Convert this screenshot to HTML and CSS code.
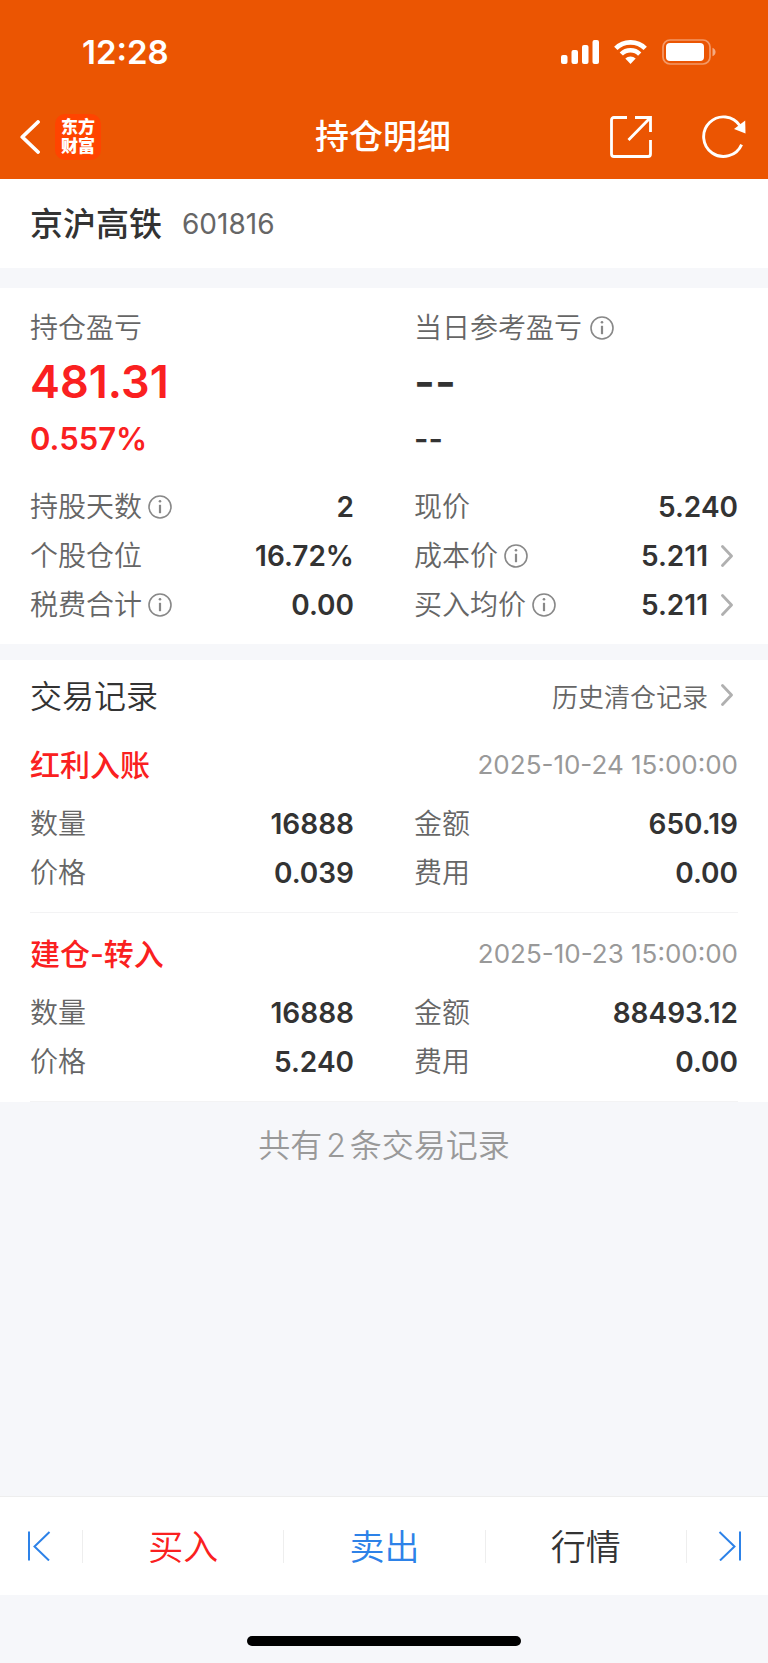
FILE: index.html
```html
<!DOCTYPE html>
<html lang="zh-CN">
<head>
    <meta charset="UTF-8">
    <meta name="viewport" content="width=device-width, initial-scale=1.0">
    <title>持仓明细</title>
    <link rel="stylesheet" href="styles.css">
</head>
<body>
    <svg class="symbols" aria-hidden="true">
        <symbol id="icon-info" viewBox="0 0 24 24">
            <circle cx="12" cy="12" r="11" fill="none" stroke="currentColor" stroke-width="1.6"/>
            <circle cx="12" cy="6.3" r="1.3" fill="currentColor"/>
            <path d="M12 9.8v8.4" stroke="currentColor" stroke-width="2.2"/>
        </symbol>
        <symbol id="icon-more" viewBox="0 0 12 22">
            <path d="M1.5 1.5L10.5 11L1.5 20.5" fill="none" stroke="currentColor" stroke-width="2.8" stroke-linecap="round" stroke-linejoin="round"/>
        </symbol>
    </svg>

    <header class="header">
        <div class="status-bar">
            <span class="time">12:28</span>
            <div class="status-icons">
                <svg width="38" height="24" viewBox="0 0 38 24" fill="#fff">
                    <rect x="0" y="15" width="6.5" height="9" rx="2"/>
                    <rect x="10.5" y="10" width="6.5" height="14" rx="2"/>
                    <rect x="21" y="5" width="6.5" height="19" rx="2"/>
                    <rect x="31.5" y="0" width="6.5" height="24" rx="2"/>
                </svg>
                <svg width="33" height="24" viewBox="0 0 33 24">
                    <path d="M1.8 8.4A21 21 0 0 1 31.2 8.4" fill="none" stroke="#fff" stroke-width="4.8"/>
                    <path d="M7.3 14A13 13 0 0 1 25.7 14" fill="none" stroke="#fff" stroke-width="4.6"/>
                    <path d="M11.3 18.6A7.6 7.6 0 0 1 21.7 18.6L16.5 24Z" fill="#fff"/>
                </svg>
                <svg width="54" height="26" viewBox="0 0 54 26">
                    <rect x="1" y="1" width="47" height="24" rx="7" fill="none" stroke="#fff" stroke-opacity="0.4" stroke-width="1.7"/>
                    <rect x="4" y="4" width="38" height="18" rx="4" fill="#fff"/>
                    <path d="M50.5 8.7C54.6 10.5 54.6 15.5 50.5 17.3Z" fill="#fff" fill-opacity="0.5"/>
                </svg>
            </div>
        </div>
        <nav class="nav">
            <div class="nav-left">
                <button class="icon-button" aria-label="返回">
                    <svg width="20" height="34" viewBox="0 0 20 34">
                        <path d="M18 2L2.3 17L18 32" fill="none" stroke="#fff" stroke-width="3.8" stroke-linecap="round" stroke-linejoin="round"/>
                    </svg>
                </button>
                <a class="logo" href="#">东方<br>财富</a>
            </div>
            <h1>持仓明细</h1>
            <div class="nav-right">
                <button class="icon-button" aria-label="分享">
                    <svg width="42" height="42" viewBox="0 0 42 42" fill="none" stroke="#fff" stroke-width="2.8">
                        <path d="M17 1.5H4Q1.5 1.5 1.5 4V38Q1.5 40.5 4 40.5H38Q40.5 40.5 40.5 38V24"/>
                        <path d="M25 1.5H40.5V16M40 2L18.5 24"/>
                    </svg>
                </button>
                <button class="icon-button" aria-label="刷新">
                    <svg width="44" height="44" viewBox="0 0 44 44">
                        <path d="M39.6 29.6A19.8 19.8 0 1 1 38 10.8" fill="none" stroke="#fff" stroke-width="2.9"/>
                        <path d="M43.2 5.5L43.5 18.5L32 14Z" fill="#fff"/>
                    </svg>
                </button>
            </div>
        </nav>
    </header>

    <main>
        <section class="stock">
            <h2>京沪高铁</h2>
            <span class="code">601816</span>
        </section>

        <section class="position">
            <div class="columns">
                <div class="profit">
                    <div class="label">持仓盈亏</div>
                    <div class="amount red">481.31</div>
                    <div class="percent red">0.557%</div>
                </div>
                <div class="profit">
                    <div class="label">当日参考盈亏 <button class="info" aria-label="说明"><svg><use href="#icon-info"/></svg></button></div>
                    <div class="amount">--</div>
                    <div class="percent">--</div>
                </div>
            </div>
            <dl class="columns stats">
                <div class="row">
                    <dt class="label">持股天数<button class="info" aria-label="说明"><svg><use href="#icon-info"/></svg></button></dt>
                    <dd>2</dd>
                </div>
                <div class="row">
                    <dt class="label">现价</dt>
                    <dd>5.240</dd>
                </div>
                <div class="row">
                    <dt class="label">个股仓位</dt>
                    <dd>16.72%</dd>
                </div>
                <div class="row">
                    <dt class="label">成本价<button class="info" aria-label="说明"><svg><use href="#icon-info"/></svg></button></dt>
                    <dd><a href="#">5.211<svg class="more"><use href="#icon-more"/></svg></a></dd>
                </div>
                <div class="row">
                    <dt class="label">税费合计<button class="info" aria-label="说明"><svg><use href="#icon-info"/></svg></button></dt>
                    <dd>0.00</dd>
                </div>
                <div class="row">
                    <dt class="label">买入均价<button class="info" aria-label="说明"><svg><use href="#icon-info"/></svg></button></dt>
                    <dd><a href="#">5.211<svg class="more"><use href="#icon-more"/></svg></a></dd>
                </div>
            </dl>
        </section>

        <section class="records">
            <div class="records-head">
                <h2>交易记录</h2>
                <a href="#">历史清仓记录<svg class="more"><use href="#icon-more"/></svg></a>
            </div>
            <article class="record">
                <div class="record-head">
                    <h3>红利入账</h3>
                    <time datetime="2025-10-24T15:00:00">2025-10-24 15:00:00</time>
                </div>
                <dl class="columns">
                    <div class="row"><dt class="label">数量</dt><dd>16888</dd></div>
                    <div class="row"><dt class="label">金额</dt><dd>650.19</dd></div>
                    <div class="row"><dt class="label">价格</dt><dd>0.039</dd></div>
                    <div class="row"><dt class="label">费用</dt><dd>0.00</dd></div>
                </dl>
            </article>
            <article class="record">
                <div class="record-head">
                    <h3>建仓-转入</h3>
                    <time datetime="2025-10-23T15:00:00">2025-10-23 15:00:00</time>
                </div>
                <dl class="columns">
                    <div class="row"><dt class="label">数量</dt><dd>16888</dd></div>
                    <div class="row"><dt class="label">金额</dt><dd>88493.12</dd></div>
                    <div class="row"><dt class="label">价格</dt><dd>5.240</dd></div>
                    <div class="row"><dt class="label">费用</dt><dd>0.00</dd></div>
                </dl>
            </article>
        </section>
        <p class="total">共有<span class="count">2</span>条交易记录</p>
    </main>

    <footer>
        <div class="actions">
            <button class="prev blue" aria-label="上一只">
                <svg width="24" height="30" viewBox="0 0 24 30" fill="none" stroke="currentColor" stroke-width="2">
                    <path d="M2 0.5V29.5M22.5 1L7.5 15.5L22 29.5"/>
                </svg>
            </button>
            <button class="red">买入</button>
            <button class="blue">卖出</button>
            <button>行情</button>
            <button class="next blue" aria-label="下一只">
                <svg width="24" height="30" viewBox="0 0 24 30" fill="none" stroke="currentColor" stroke-width="2">
                    <path d="M22 0.5V29.5M1.5 1L16.5 15.5L2 29.5"/>
                </svg>
            </button>
        </div>
        <div class="home-indicator"></div>
    </footer>
</body>
</html>
```
FILE: styles.css
```css
* {
    box-sizing: border-box;
}
body {
    margin: 0;
    min-height: 100vh;
    display: flex;
    flex-direction: column;
    background-color: #f6f7fa;
    color: #333;
    font-family: Inter, 'Noto Sans CJK SC', sans-serif;
    font-size: 28px;
}
h1, h2, h3, p, dl, dd {
    margin: 0;
}
h1, h2, h3 {
    font-weight: 500;
}
h2, h3 {
    padding-bottom: 3px;
}
a {
    color: inherit;
    text-decoration: none;
}
button {
    padding: 0;
    border: none;
    background: none;
    color: inherit;
    font: inherit;
    cursor: pointer;
}
svg {
    display: block;
}
.symbols {
    display: none;
}
.red {
    color: #fa2020;
}
.blue {
    color: #2d82e8;
}

/* header */
.header {
    background-color: #eb5502;
    color: #fff;
    padding-bottom: 8px;
}
.status-bar {
    display: flex;
    justify-content: space-between;
    align-items: center;
    height: 103px;
    padding: 0 52px 0 82px;
}
.time {
    font-size: 33px;
    font-weight: 600;
}
.status-icons {
    display: flex;
    align-items: center;
    gap: 15px;
}
.nav {
    display: grid;
    grid-template-columns: 1fr auto 1fr;
    align-items: center;
    height: 68px;
    padding: 0 22px 0 20px;
}
.nav h1 {
    font-size: 34px;
    line-height: 48px;
}
.nav-left, .nav-right {
    display: flex;
    align-items: center;
    gap: 15px;
}
.nav-right {
    justify-content: flex-end;
    gap: 50px;
}
.logo {
    padding: 4px 6px;
    border-radius: 10px;
    background-color: #ff4400;
    font-size: 17px;
    font-weight: 900;
    line-height: 19px;
}

/* stock name */
.stock {
    display: flex;
    align-items: center;
    gap: 20px;
    height: 89px;
    padding: 0 30px;
    background-color: #fff;
}
.stock h2 {
    font-size: 33px;
}
.code {
    font-size: 28px;
    color: #666;
}

/* position */
.position {
    margin: 20px 0 16px;
    padding: 19px 30px 15px;
    background-color: #fff;
}
.columns {
    display: grid;
    grid-template-columns: 1fr 1fr;
    column-gap: 60px;
}
.label {
    display: flex;
    align-items: center;
    gap: 6px;
    padding-bottom: 3px;
    color: #666;
    font-weight: 350;
}
.profit .label {
    gap: 8px;
    height: 40px;
}
.amount {
    font-size: 45px;
    font-weight: 600;
    line-height: 70px;
}
.percent {
    font-size: 31px;
    font-weight: 600;
    line-height: 44px;
}
.stats {
    margin-top: 21px;
}
.row {
    display: flex;
    justify-content: space-between;
    align-items: center;
    height: 49px;
}
.row dd {
    font-weight: 600;
}
.info {
    padding-top: 4px;
    color: #888;
}
.info svg {
    width: 24px;
    height: 24px;
}
.row a, .records-head a {
    display: flex;
    align-items: center;
}
.more {
    width: 12px;
    height: 22px;
    margin: 0 5px 0 13px;
    color: #b0b0b0;
}

/* records */
.records {
    padding: 6px 30px 0;
    background-color: #fff;
}
.records-head, .record-head {
    display: flex;
    justify-content: space-between;
    align-items: center;
}
.records-head {
    height: 58px;
}
.records-head h2 {
    font-size: 32px;
    font-weight: 350;
}
.records-head a {
    font-size: 26px;
    font-weight: 350;
    color: #666;
}
.record {
    padding: 15px 0;
    border-bottom: 1px solid #f3f3f4;
}
.record-head {
    height: 50px;
    margin-bottom: 10px;
}
.record-head h3 {
    font-size: 30px;
    color: #fa2020;
}
.record-head time {
    font-size: 26px;
    color: #999;
}
.total {
    font-size: 32px;
    font-weight: 350;
    line-height: 88px;
    text-align: center;
    color: #999;
}
.count {
    margin: 0 4px;
}

/* bottom bar */
footer {
    margin-top: auto;
}
.actions {
    display: grid;
    grid-template-columns: 82px 1fr 1fr 1fr 82px;
    align-items: center;
    height: 99px;
    border-top: 1px solid #eee;
    background-color: #fff;
}
.actions button {
    display: flex;
    justify-content: center;
    align-items: center;
    height: 33px;
    padding-bottom: 4px;
    font-size: 35px;
    font-weight: 350;
}
.actions button + button {
    border-left: 1px solid #eee;
}
.actions .prev {
    padding: 0 5px 0 0;
}
.actions .next {
    padding: 0 0 0 5px;
}
.home-indicator {
    width: 274px;
    height: 10px;
    margin: 41px auto 17px;
    border-radius: 5px;
    background-color: #000;
}
```
